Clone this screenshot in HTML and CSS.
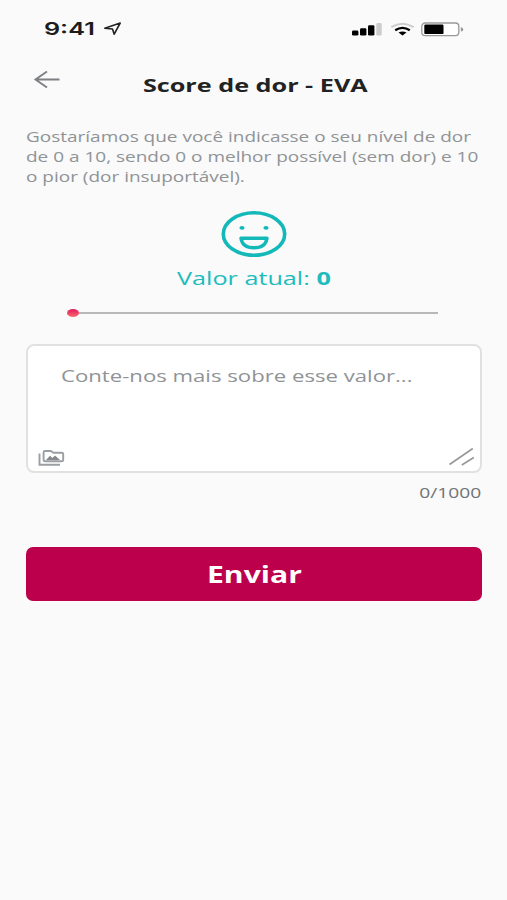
FILE: index.html
```html
<!DOCTYPE html>
<html lang="pt-BR">
<head>
<meta charset="utf-8">
<title>Score de dor - EVA</title>
<link rel="stylesheet" href="styles.css">
</head>
<body>
<main class="screen">
  <div class="status">
    <span class="time">9:41</span>
    <svg class="location" width="20" height="16" viewBox="0 0 20 16"><path d="M1.8 7.3 17.2 2 11.2 13.2 9.5 8Z" fill="none" stroke="#222" stroke-width="1.6" stroke-linejoin="round"/></svg>
    <svg class="signals" width="112" height="16" viewBox="0 0 112 16">
      <rect x="0" y="8.5" width="6.4" height="5" rx="1.3"/><rect x="8" y="6.2" width="6.4" height="7.3" rx="1.3"/><rect x="16" y="3.3" width="6.4" height="10.2" rx="1.3"/><rect x="24.3" y="1" width="5.4" height="12.5" rx="1.3" fill="#ccc"/>
      <g fill="none"><path d="M39.3 5.2Q50.5-1.8 61.7 5.2" stroke="#ccc" stroke-width="2"/><path d="M43.2 8.2Q50.5 3.5 57.8 8.2" stroke="#000" stroke-width="2.4"/></g><path d="M46.5 10.6Q50.5 8.2 54.5 10.6L50.5 13.4Z"/>
      <rect x="69.8" y="1" width="37" height="12.6" rx="3.4" fill="#fff" stroke="#999" stroke-width="1.3"/><rect x="72.3" y="2.5" width="19.2" height="9.6" rx="1.2"/><path d="M108.8 5.2Q111.3 5.5 111.3 7.4T108.8 9.6Z" fill="#999"/>
    </svg>
  </div>
  <header class="header">
    <svg class="back" width="28" height="20" viewBox="0 0 28 20"><path d="M26.5 9.5H2.5M14 1.5 2.5 9.5 14 17.5" fill="none" stroke="#7d7f82" stroke-width="1.9"/></svg>
    <h1 class="title"><span class="wide">Score de dor - EVA</span></h1>
  </header>
  <p class="intro">
    <span>Gostaríamos que você indicasse o seu nível de dor</span>
    <span>de 0 a 10, sendo 0 o melhor possível (sem dor) e 10</span>
    <span>o pior (dor insuportável).</span>
  </p>
  <section class="score">
    <svg width="66" height="48" viewBox="0 0 66 48" fill="none" stroke="#13b8b8" stroke-width="3.6"><ellipse cx="33" cy="24" rx="30.7" ry="21.3"/><path d="M20 28.2H46C45 34.8 40 37.8 33 37.8S21 34.8 20 28.2Z" stroke-width="3.4" stroke-linejoin="round"/><g fill="#13b8b8" stroke="none"><ellipse cx="21" cy="17.8" rx="2.6" ry="1.9"/><ellipse cx="45" cy="17.8" rx="2.6" ry="1.9"/></g></svg>
    <p class="value"><span class="wide">Valor atual: <b>0</b></span></p>
    <div class="slider"><i class="thumb"></i></div>
  </section>
  <section class="note">
    <p class="placeholder"><span class="wide">Conte-nos mais sobre esse valor...</span></p>
    <div class="tools">
      <svg width="27" height="18" viewBox="0 0 27 18" fill="none" stroke="#9a9ea2" stroke-width="1.9"><path d="M1.5 4.5V15.7H22" /><path d="M7.2 2H12.4Q13.4 2 14 2.8T15.6 3.7H23.6Q25.2 3.7 25.2 5V11Q25.2 12.3 23.6 12.3H7.2Q5.6 12.3 5.6 11V3.3Q5.6 2 7.2 2Z"/><path d="M8 11 12 6.8 14.4 9.1 17 6.6 22 11Z" fill="#85898d" stroke="none"/></svg>
      <svg width="26" height="20" viewBox="0 0 26 20"><path d="M.5 17.5 23.8 1.5M12.8 18 24.8 10.5" fill="none" stroke="#999" stroke-width="1.7"/></svg>
    </div>
  </section>
  <p class="counter"><span class="wide">0/1000</span></p>
  <button class="send"><span class="wide">Enviar</span></button>
</main>
</body>
</html>
```
FILE: styles.css
```css
* { box-sizing: border-box; margin: 0; padding: 0; }
body { background: #fafafa; font-family: "Open Sans", "Noto Sans", sans-serif; }
svg { display: block; flex: none; }
.screen { height: 900px; padding: 0 25px 0 26px; overflow: hidden; }
.wide { display: inline-block; white-space: nowrap; transform: scaleX(1.3); }
.status { display: flex; align-items: center; height: 40px; padding: 17px 18px 0 18px; }
.time { width: 59px; font: 600 17.5px/22px Inter, sans-serif; color: #1c1c1c; white-space: nowrap; transform: scaleX(1.44); transform-origin: left; }
.location { margin-top: 1px; }
.signals { margin-left: auto; margin-top: 3px; }
.header { display: grid; grid-template-columns: 28px 1fr 33px; height: 66px; padding-left: 7px; }
.back { margin-top: 30px; }
.title { margin-top: 33px; text-align: center; font-size: 18px; line-height: 24px; font-weight: 700; color: #222; }
.title .wide { transform: scaleX(1.4); }
.intro { padding-top: 20px; color: #8f9396; font-size: 14.7px; line-height: 20.1px; }
.intro span { display: block; width: max-content; transform: scaleX(1.292); transform-origin: left; }
.score { display: flex; flex-direction: column; align-items: center; padding-top: 23.7px; }
.value { margin-top: 7px; color: #20bcbc; font-size: 18px; line-height: 26px; }
.value .wide { transform: scaleX(1.4); }
.slider { display: flex; align-items: center; width: 367px; height: 9px; margin-top: 17.8px; background: linear-gradient(#b8b8b8, #b8b8b8) center / 100% 2px no-repeat; }
.thumb { width: 12px; height: 8px; margin-left: -4px; border-radius: 50%; background: linear-gradient(#e0185c, #fa6d70); }
.note { display: flex; flex-direction: column; justify-content: space-between; height: 129px; margin-top: 26.5px; border: 2px solid #e1e1e1; border-radius: 8px; background: #fff; }
.placeholder { padding: 18px 0 0 33px; color: #8f9396; font-size: 17px; line-height: 24px; }
.placeholder .wide { transform: scaleX(1.303); transform-origin: left; }
.tools { display: flex; justify-content: space-between; align-items: flex-end; padding: 0 5px 4px 10px; }
.counter { margin-top: 9.5px; padding-right: 1px; text-align: right; color: #707376; font-size: 14px; line-height: 20px; }
.counter .wide { transform: scaleX(1.37); transform-origin: right; }
.send { display: block; width: 100%; height: 54px; margin-top: 44px; padding-top: 1px; border: 0; border-radius: 7px; background: #bd004b; color: #fff; font: 700 22.5px/53px "Open Sans", sans-serif; }
.send .wide { transform: scaleX(1.34); }
```
